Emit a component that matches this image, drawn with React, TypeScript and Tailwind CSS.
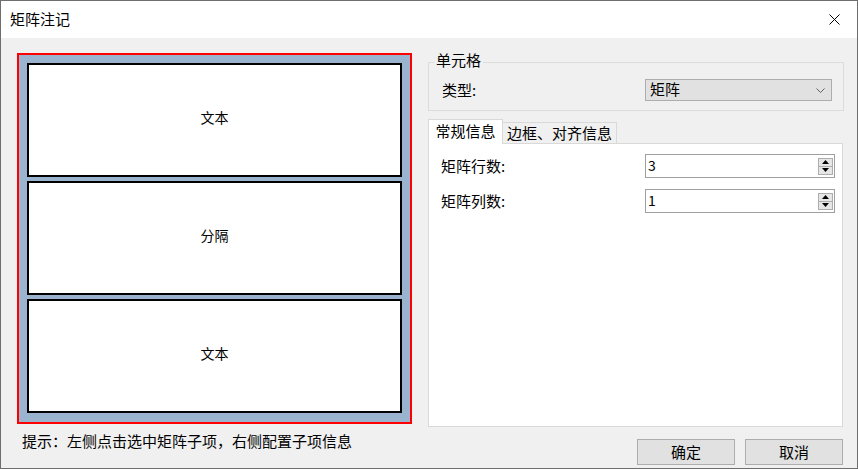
import React from "react";

const font = { fontFamily: '"Noto Sans CJK SC", "Noto Sans", sans-serif' };

function Spinner({ value }: { value: string }) {
  return (
    <div className="flex h-[24px] w-[190px] items-center border border-[#a0a0a0] bg-white pl-[2px] pr-[1px]">
      <span className="flex-1 pb-[3px] text-[14px] leading-none text-black">{value}</span>
      <div className="flex flex-col">
        <div className="flex h-[9px] w-[15px] items-center justify-center border border-[#adadad] bg-[#e6e6e6]">
          <svg width="7" height="4" viewBox="0 0 7 4">
            <polygon points="0,4 7,4 3.5,0" fill="#000" />
          </svg>
        </div>
        <div className="-mt-px flex h-[9px] w-[15px] items-center justify-center border border-[#adadad] bg-[#e6e6e6]">
          <svg width="7" height="4" viewBox="0 0 7 4">
            <polygon points="0,0 7,0 3.5,4" fill="#000" />
          </svg>
        </div>
      </div>
    </div>
  );
}

function Cell({ text }: { text: string }) {
  return (
    <div className="flex h-[114px] items-center justify-center border-2 border-black bg-white pb-[6px] text-[14px] text-black">
      {text}
    </div>
  );
}

export default function App() {
  return (
    <div
      className="flex h-[469px] w-[858px] flex-col border border-[#6e6e6e] bg-[#f0f0f0] text-black"
      style={font}
    >
      <div className="flex h-[37px] items-center justify-between bg-white pl-[9px] pr-[17px]">
        <span className="text-[15px]">矩阵注记</span>
        <svg width="11" height="11" viewBox="0 0 11 11">
          <path d="M0.5 0.5 L10.5 10.5 M10.5 0.5 L0.5 10.5" stroke="#000" strokeWidth="1" />
        </svg>
      </div>
      <div className="flex flex-1">
        <div className="flex flex-col pl-[16px] pt-[15px]">
          <div className="flex h-[371px] w-[395px] flex-col gap-[4px] border-2 border-[#ff0000] bg-[#9ab4d0] p-[8px]">
            <Cell text="文本" />
            <Cell text="分隔" />
            <Cell text="文本" />
          </div>
          <div className="ml-[5px] mt-[7px] text-[15px] leading-[20px]">
            提示：左侧点击选中矩阵子项，右侧配置子项信息
          </div>
        </div>
        <div className="ml-[16px] flex w-[416px] flex-col">
          <fieldset className="mt-[14px] h-[59px] border border-[#dcdcdc]">
            <legend className="ml-[5px] px-[2px] pb-[4px] text-[15px] leading-[16px]">单元格</legend>
            <div className="mt-[7px] flex items-center justify-between pl-[13px] pr-[11px]">
              <span className="text-[15px] leading-[20px]">类型:</span>
              <div className="flex h-[22px] w-[187px] items-center justify-between border border-[#adadad] bg-[#e1e1e1] pl-[4px] pr-[6px]">
                <span className="pb-[3px] text-[15px] leading-none">矩阵</span>
                <svg width="9" height="5" viewBox="0 0 9 5">
                  <polyline points="0.5,0.5 4.5,4.5 8.5,0.5" fill="none" stroke="#606060" strokeWidth="1" />
                </svg>
              </div>
            </div>
          </fieldset>
          <div className="mt-[8px] flex items-end">
            <div className="relative z-10 -mb-px flex h-[25px] w-[75px] items-center justify-center border border-b-0 border-[#d9d9d9] bg-white pb-[2px] text-[15px]">
              常规信息
            </div>
            <div className="flex h-[21px] w-[114px] items-center justify-center border border-b-0 border-l-0 border-[#d9d9d9] bg-[#f0f0f0] text-[15px]">
              边框、对齐信息
            </div>
          </div>
          <div className="flex h-[284px] w-[415px] flex-col gap-[11px] border border-[#d9d9d9] bg-white pl-[12px] pr-[7px] pt-[10px]">
            <div className="flex items-center justify-between">
              <span className="text-[15px] leading-[20px]">矩阵行数:</span>
              <Spinner value="3" />
            </div>
            <div className="flex items-center justify-between">
              <span className="text-[15px] leading-[20px]">矩阵列数:</span>
              <Spinner value="1" />
            </div>
          </div>
          <div className="mt-[12px] flex justify-end gap-[10px] pr-[1px]">
            <button className="h-[26px] w-[98px] border border-[#adadad] bg-[#e1e1e1] text-[15px]">确定</button>
            <button className="h-[26px] w-[98px] border border-[#adadad] bg-[#e1e1e1] text-[15px]">取消</button>
          </div>
        </div>
      </div>
    </div>
  );
}
